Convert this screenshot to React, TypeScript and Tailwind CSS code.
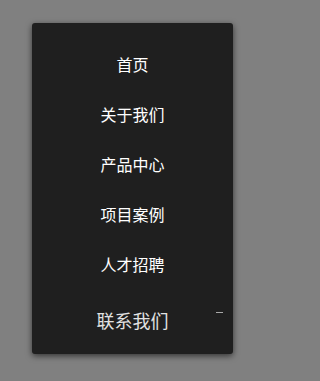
const items = ['首页', '关于我们', '产品中心', '项目案例', '人才招聘'];

export default function App() {
  return (
    <div
      className="min-h-screen w-full bg-[#808080] pt-[23px] pl-[32px]"
      style={{ fontFamily: '"Noto Sans CJK SC", "Noto Sans", sans-serif' }}
    >
      <div className="flex h-[331px] w-[201px] flex-col rounded-[3px] bg-[#1f1f1f] pt-[16px] shadow-[0_2px_6px_rgba(0,0,0,0.6)]">
        {items.map((label) => (
          <a
            key={label}
            className="flex h-[50px] items-center justify-center text-[16px] text-white"
          >
            {label}
          </a>
        ))}
        <div className="relative flex h-[62px] items-center justify-center text-[18px] text-[#e2e2e2]">
          联系我们
          <span className="absolute right-[10px] top-[23px] h-px w-[7px] bg-[#a8a8a8]" />
        </div>
      </div>
    </div>
  );
}
